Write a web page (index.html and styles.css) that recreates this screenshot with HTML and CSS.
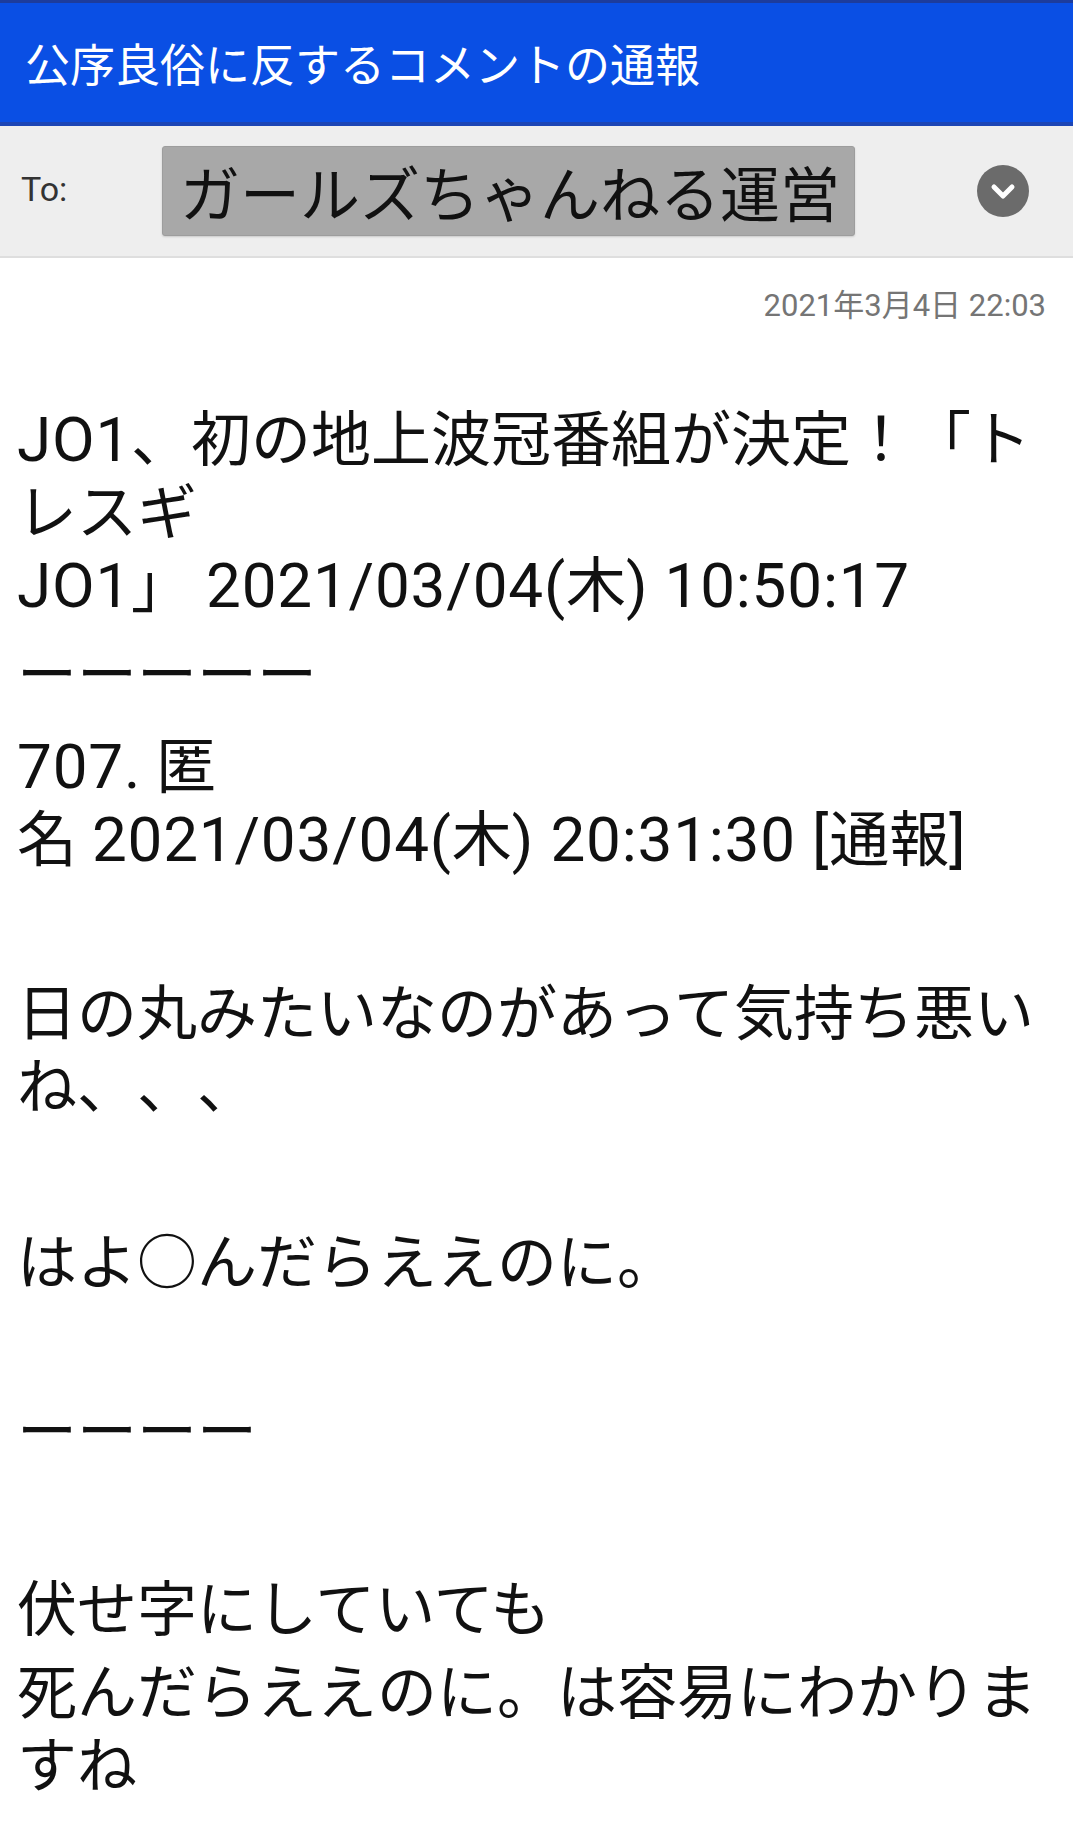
FILE: index.html
```html
<!DOCTYPE html>
<html lang="ja">
<head>
<meta charset="utf-8">
<title>公序良俗に反するコメントの通報</title>
<link rel="stylesheet" href="styles.css">
</head>
<body>
<header class="appbar">
  <h1 class="appbar-title">公序良俗に反するコメントの通報</h1>
</header>
<div class="to-row">
  <span class="to-label">To:</span>
  <span class="chip">ガールズちゃんねる運営</span>
  <span class="dropdown">
    <svg viewBox="0 0 52 52" width="52" height="52" aria-hidden="true">
      <circle cx="26" cy="26" r="26" fill="#6b6b6b"/>
      <path d="M17 22 L26 31 L35 22" fill="none" stroke="#fff" stroke-width="5" stroke-linecap="round" stroke-linejoin="round"/>
    </svg>
  </span>
</div>
<div class="date">2021年3月4日 22:03</div>
<main class="body">
  <p class="p p1"><span class="lat">JO1</span>、初の地上波冠番組が決定！「ト<br>レスギ<br><span class="lat">JO1</span>」 <span class="lat">2021/03/04(</span>木<span class="lat">) 10:50:17</span></p>
  <p class="p p2">ーーーーー</p>
  <p class="p p3"><span class="lat">707.</span> 匿<br>名 <span class="lat">2021/03/04(</span>木<span class="lat">) 20:31:30 [</span>通報<span class="lat">]</span></p>
  <p class="p p4">日の丸みたいなのがあって気持ち悪い<br>ね、、、</p>
  <p class="p p5">はよ○んだらええのに。</p>
  <p class="p p6">ーーーー</p>
  <p class="p p7">伏せ字にしていても</p>
  <p class="p p8">死んだらええのに。は容易にわかりま<br>すね</p>
</main>
</body>
</html>
```

FILE: styles.css
```css
html, body {
  margin: 0;
  padding: 0;
  background: #ffffff;
}
body {
  font-family: Roboto, "Noto Sans CJK JP", sans-serif;
  color: #111111;
  width: 1073px;
  overflow: hidden;
  text-spacing-trim: space-all;
}
.appbar {
  box-sizing: border-box;
  height: 126px;
  background: #0a4fe4;
  border-top: 3px solid #1d3c9c;
  border-bottom: 4px solid #1c45b5;
  display: flex;
  align-items: center;
  padding-left: 25px;
}
.appbar-title {
  margin: 0;
  font-family: "Noto Sans CJK JP", sans-serif;
  font-weight: 400;
  font-size: 45px;
  line-height: 1;
  color: #ffffff;
}
.to-row {
  box-sizing: border-box;
  height: 132px;
  background: #eeeeee;
  border-bottom: 2px solid #dedede;
  display: flex;
  align-items: center;
  padding-left: 21px;
  padding-right: 44px;
}
.to-label {
  width: 141px;
  font-size: 34px;
  color: #333333;
  position: relative;
  top: -2px;
}
.chip {
  box-sizing: border-box;
  width: 693px;
  height: 90px;
  background: #a8a8a8;
  border: 1px solid #9d9d9d;
  border-radius: 3px;
  box-shadow: 0 1px 2px rgba(0,0,0,0.15);
  display: flex;
  align-items: center;
  padding-left: 17px;
  font-family: "Noto Sans CJK JP", sans-serif;
  font-size: 60px;
  line-height: 1;
  color: #111111;
  white-space: nowrap;
}
.dropdown {
  margin-left: auto;
  width: 52px;
  height: 52px;
  display: flex;
}
.date {
  margin-top: 28px;
  height: 40px;
  line-height: 40px;
  text-align: right;
  padding-right: 27px;
  font-size: 31px;
  color: #757575;
  font-family: Roboto, "Noto Sans CJK JP", sans-serif;
}
.body {
  padding-left: 17px;
  margin-top: 78px;
}
.p {
  margin: 0;
  font-size: 60px;
  line-height: 73px;
  white-space: nowrap;
  color: #111111;
}
.lat {
  font-size: 62px;
  letter-spacing: 0.8px;
  line-height: 1;
}
.p2 { margin-top: 16px; }
.p3 { margin-top: 19px; }
.p4 { margin-top: 101px; }
.p5 { margin-top: 103px; }
.p6 { margin-top: 96px; }
.p7 { margin-top: 105px; }
.p8 { margin-top: 10px; }
```
